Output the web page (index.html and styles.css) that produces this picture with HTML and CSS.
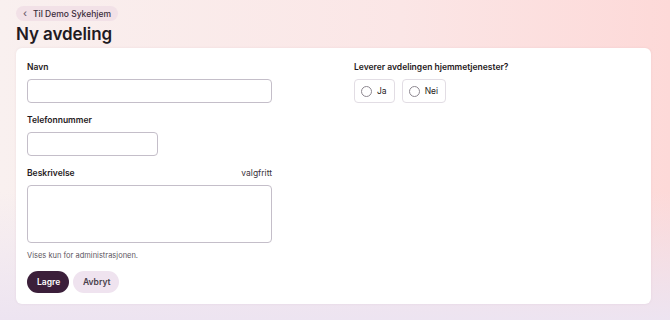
FILE: index.html
```html
<!DOCTYPE html>
<html>
  <head>
    <title>Ny avdeling</title>
    <meta charset="UTF-8">
    <meta name="viewport" content="width=device-width, initial-scale=1"/>
    <link rel="stylesheet" href="styles.css">
  </head>
  <body>
    <div class="page">
      <a class="back" href="#"><span class="chev">&lsaquo;</span>Til Demo Sykehjem</a>
      <h1>Ny avdeling</h1>
      <form class="card">
        <div class="col">
          <div class="field">
            <label>Navn</label>
            <input type="text" class="wide">
          </div>
          <div class="field">
            <label>Telefonnummer</label>
            <input type="text" class="short">
          </div>
          <div class="field">
            <div class="labelrow"><label>Beskrivelse</label><span class="opt">valgfritt</span></div>
            <textarea class="wide"></textarea>
            <p class="help">Vises kun for administrasjonen.</p>
          </div>
          <div class="actions">
            <button type="button" class="primary">Lagre</button>
            <button type="button" class="secondary">Avbryt</button>
          </div>
        </div>
        <div class="col">
          <div class="field">
            <label>Leverer avdelingen hjemmetjenester?</label>
            <div class="radios">
              <label class="radio"><span class="dot"></span>Ja</label>
              <label class="radio"><span class="dot"></span>Nei</label>
            </div>
          </div>
        </div>
      </form>
    </div>
  </body>
</html>
```

FILE: styles.css
```css
html, body {
  width: 100%;
  height: 100%;
}
body {
  margin: 0;
  font-family: Inter, 'Noto Sans', sans-serif;
  color: #1f1a22;
  background: linear-gradient(180deg, rgba(238,228,242,0) 60%, #ede4f1 100%),
              linear-gradient(90deg, #f9f0ef 0%, #fbe6e6 60%, #fdd9d8 100%);
}
.page {
  display: flex;
  flex-direction: column;
  align-items: flex-start;
  padding: 6px 19px 0 16px;
}
.back {
  display: flex;
  align-items: center;
  gap: 6px;
  height: 15px;
  padding: 0 7px 0 7px;
  border-radius: 8px;
  background-color: #f2e1e7;
  color: #3a2c3a;
  font-size: 8.5px;
  font-weight: 500;
  text-decoration: none;
}
.chev {
  font-size: 10px;
  line-height: 1;
  margin-top: -2px;
  color: #6b5a6b;
}
h1 {
  margin: 0;
  font-size: 17px;
  font-weight: 600;
  line-height: 27px;
  letter-spacing: -0.1px;
}
.card {
  align-self: stretch;
  background-color: white;
  border-radius: 6px;
  box-shadow: 0 0 3px rgba(120,60,80,0.08);
  padding: 14px 11px 10px 11px;
  height: 256px;
  box-sizing: border-box;
  display: grid;
  grid-template-columns: 286px 1fr;
  column-gap: 41px;
}
.col {
  display: flex;
  flex-direction: column;
}
.field {
  display: flex;
  flex-direction: column;
  margin-bottom: 12px;
}
label {
  font-size: 8.5px;
  font-weight: 600;
  line-height: 11px;
  margin-bottom: 6px;
}
.labelrow {
  display: flex;
  justify-content: space-between;
  width: 245px;
}
.opt {
  font-size: 8.5px;
  line-height: 11px;
  color: #3a323c;
}
input, textarea {
  box-sizing: border-box;
  border: 1px solid #c4bec9;
  border-radius: 4px;
  background: white;
  font-family: inherit;
  margin: 0;
  resize: none;
}
input.wide {
  width: 245px;
  height: 24px;
}
input.short {
  width: 131px;
  height: 24px;
}
textarea.wide {
  width: 245px;
  height: 58px;
}
.help {
  margin: 8px 0 0 0;
  font-size: 7.5px;
  line-height: 10px;
  color: #5c5560;
}
.actions {
  display: flex;
  gap: 4px;
  margin-top: -2px;
}
.actions button {
  height: 22px;
  border: none;
  border-radius: 11px;
  font-family: inherit;
  font-size: 8.5px;
  font-weight: 600;
  padding: 0 10px;
}
.primary {
  background-color: #3b1f3a;
  color: white;
  width: 42px;
}
.secondary {
  background-color: #efe3ef;
  color: #4a3f4c;
  width: 46px;
  font-weight: 500;
}
.radios {
  display: flex;
  gap: 7px;
}
.radio {
  display: flex;
  align-items: center;
  gap: 5px;
  box-sizing: border-box;
  height: 24px;
  padding: 0 7px 0 6px;
  border: 1px solid #e2dde4;
  border-radius: 4px;
  font-weight: 400;
  margin: 0;
}
.dot {
  width: 11px;
  height: 11px;
  box-sizing: border-box;
  border: 1px solid #8d8790;
  border-radius: 50%;
}
```
